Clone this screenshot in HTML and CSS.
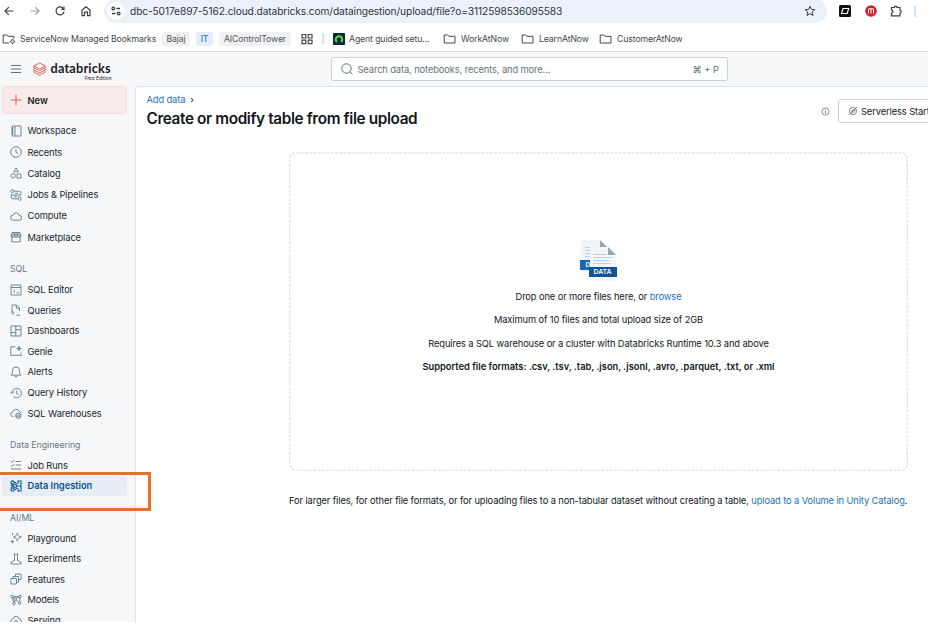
FILE: index.html
```html
<!DOCTYPE html>
<html lang="en">
<head>
<meta charset="utf-8">
<title>Create or modify table from file upload</title>
<link rel="stylesheet" href="styles.css">
</head>
<body>
<div class="window">
  <div class="toolbar">
    <svg class="nav" viewBox="0 0 12 12"><path d="M10.5 6H2M5.8 2.200 2 6l3.800 3.800"/></svg>
    <svg class="nav muted" viewBox="0 0 12 12"><path d="M1.500 6H10M6.200 2.200 10 6 6.200 9.800"/></svg>
    <svg class="nav" viewBox="0 0 12 12"><path d="M9.500 3.800A4 4 0 1 0 10 6.600M10 1.500v2.800H7.200"/></svg>
    <svg class="nav" viewBox="0 0 12 12"><path d="M2 5 6 1.700 10 5v5.700H7.500V7.200h-3v3.500H2z"/></svg>
    <div class="address">
      <span class="site-info"><svg viewBox="0 0 12 12"><circle cx="3.300" cy="3.500" r="1.300"/><path d="M6.500 3.500H10M2 8.500h3.500"/><circle cx="8.700" cy="8.500" r="1.300"/></svg></span>
      <span class="url">dbc-5017e897-5162.cloud.databricks.com/dataingestion/upload/file?o=3112598536095583</span>
      <svg class="star" viewBox="0 0 12 12"><path d="m6 1.200 1.400 3.200 3.500.3-2.700 2.300.8 3.500L6 8.600l-3 1.900.8-3.500L1.100 4.700l3.500-.3z"/></svg>
    </div>
    <svg class="ext" viewBox="0 0 12 12"><rect width="12" height="12" rx="1.500" fill="#111"/><path d="M4 3.500h5.700L8.200 8.500H2.500z" fill="none" stroke="#fff" stroke-width="1.100"/></svg>
    <svg class="ext" viewBox="0 0 12 12"><circle cx="6" cy="6" r="5.800" fill="#d91f2b"/><path d="M3.500 8.500V4M6 8.500V3.500M8.500 8.500V4M3.500 3.800h5" fill="none" stroke="#fff" stroke-width="1"/></svg>
    <svg class="ext line" viewBox="0 0 12 12"><path d="M1.500 2.500h3C4.500.7 7 .7 7 2.500h3v3c1.800 0 1.800 2.300 0 2.300v3H1.500V8.200c2 0 2-3 0-3z"/></svg>
    <i class="divider"></i>
  </div>
  <div class="bookmarks">
    <svg class="folder" viewBox="0 0 14 12"><path d="M7 10H1.200V2h3.500L6 3.300h6V5.500"/><circle cx="10.500" cy="8.500" r="1.700"/><path d="M10.500 5.800v1m0 3.400v1M7.800 8.500h1m3.400 0h1"/></svg>
    <span class="managed">ServiceNow Managed Bookmarks</span>
    <span class="chip">Bajaj</span>
    <span class="chip blue">IT</span>
    <span class="chip">AIControlTower</span>
    <svg class="apps" viewBox="0 0 12 12"><path d="M1 1.500h3.800v3.500H1zM7.200 1.500H11v3.500H7.200zM1 7.200h3.800v3.500H1zM7.200 7.200H11v3.500H7.200z"/></svg>
    <i class="divider"></i>
    <svg class="agent" viewBox="0 0 12 12"><rect width="12" height="12" rx=".8" fill="#052d36"/><path d="M3.900 8.900a3.200 3.200 0 1 1 4.200 0" fill="none" stroke="#61d34c" stroke-width="2"/></svg>
    <span class="guided">Agent guided setu...</span>
    <svg class="folder" viewBox="0 0 14 12"><path d="M1.200 10V2h3.500L6 3.300h6V10z"/></svg>
    <span class="place">WorkAtNow</span>
    <svg class="folder" viewBox="0 0 14 12"><path d="M1.200 10V2h3.500L6 3.300h6V10z"/></svg>
    <span class="place">LearnAtNow</span>
    <svg class="folder" viewBox="0 0 14 12"><path d="M1.200 10V2h3.500L6 3.300h6V10z"/></svg>
    <span class="place">CustomerAtNow</span>
  </div>
  <header class="header">
    <svg class="burger" viewBox="0 0 12 12"><path d="M1 2.500h10M1 6h10M1 9.500h10"/></svg>
    <svg class="brick" viewBox="0 0 12 13"><path d="M.8 3.600 6 .9l5.200 2.700L6 6.500zM.8 3.600v1.700L6 8.200l5.200-2.900V3.600M.8 5.500v2L6 10.200l5.200-2.700v-2M.8 7.700v1.800L6 12.300l5.200-2.800V7.700"/></svg>
    <div class="brand"><b>databricks</b><small>Free Edition</small></div>
    <div class="search">
      <svg viewBox="0 0 12 12"><circle cx="5.500" cy="5.500" r="4.700"/><path d="m9 9 2.300 2.300"/></svg>
      <span class="hint">Search data, notebooks, recents, and more...</span>
      <span class="keys">⌘ + P</span>
    </div>
  </header>
  <div class="body">
    <nav class="sidebar">
      <a class="new"><svg viewBox="0 0 12 12"><path d="M6 .8v10.400M.8 6h10.400"/></svg>New</a>
      <div class="group main">
        <a><svg viewBox="0 0 12 12"><path d="M2.500 1H11v10H2.500zM5 1v10M1 3h2.500M1 5h2.500M1 7h2.500M1 9h2.500"/></svg>Workspace</a>
        <a><svg viewBox="0 0 12 12"><circle cx="6" cy="6" r="5.300"/><path d="M6 3v3.300l2 1.200"/></svg>Recents</a>
        <a><svg viewBox="0 0 12 12"><path d="M6 .8 8.200 4.800H3.800zM7 7h4v4H7z"/><circle cx="3.200" cy="8.800" r="2.200"/></svg>Catalog</a>
        <a><svg viewBox="0 0 12 12"><circle cx="2.300" cy="2.200" r="1.500"/><circle cx="9.700" cy="9.800" r="1.500"/><path d="M3.800 2.200h5.500a1.900 1.900 0 0 1 0 3.800H3a1.900 1.900 0 0 0 0 3.800h5.200M5 4.300h3M4 7.800h3M1 4.800l2 2M11 5.500 8.500 7.800"/></svg>Jobs &amp; Pipelines</a>
        <a><svg viewBox="0 0 12 12"><path d="M3.200 10.200a2.500 2.500 0 0 1-.2-5 3.200 3.200 0 0 1 6.200.2 2.400 2.400 0 0 1 0 4.800z"/></svg>Compute</a>
        <a><svg viewBox="0 0 12 12"><path d="M2 1.500h8L11 5H1zM1.800 5v6h8.400V5M1 5c.4 2 2.800 2 3.300 0 .4 2 3 2 3.400 0 .5 2 3 2 3.300 0M4.500 1.500V5m3-3.500V5M2 3.200h8"/></svg>Marketplace</a>
      </div>
      <h4>SQL</h4>
      <div class="group">
        <a><svg viewBox="0 0 12 12"><path d="M1 1h10v10H1zM1 3.500h10M3.500 6l1.500 1.200-1.500 1.300M6.500 8.800h2.500"/></svg>SQL Editor</a>
        <a><svg viewBox="0 0 12 12"><path d="M2 9.500V1h4.500L9.500 4v3M6.300 1v3.200h3.200M2 7l2 1.800-2 2M6.500 11.200H10"/></svg>Queries</a>
        <a><svg viewBox="0 0 12 12"><path d="M1 1h10v10H1zM5.800 1v10M1 7.500h4.800M5.800 4.700H11"/></svg>Dashboards</a>
        <a><svg viewBox="0 0 12 12"><path d="M5.500 1.800H.8v8.500h10.400V7.500"/><path d="M9 .8c.3 1.800.9 2.400 2.700 2.700C9.900 3.800 9.300 4.400 9 6.200 8.700 4.400 8.100 3.800 6.300 3.500 8.100 3.200 8.700 2.600 9 .8z" fill="currentColor" stroke-width=".5"/></svg>Genie</a>
        <a><svg viewBox="0 0 12 12"><path d="M1 9.200h10L9.500 7V4.500a3.500 3.500 0 0 0-7 0V7zM4.700 9.500a1.300 1.300 0 0 0 2.600 0"/></svg>Alerts</a>
        <a><svg viewBox="0 0 12 12"><path d="M2 6a4.700 4.700 0 1 1 1.400 3.400M.3 4.700 2 6.500l1.700-1.800M6.700 3.500v3l2 1"/></svg>Query History</a>
        <a><svg viewBox="0 0 12 12"><path d="M3.700 9.600H3.200a2.400 2.400 0 0 1-.2-4.800 3.100 3.100 0 0 1 6-.3 2.100 2.100 0 0 1 2 1.500"/><ellipse cx="8.300" cy="7.300" rx="2.400" ry="1"/><path d="M5.900 7.300v3c0 1.200 4.800 1.200 4.800 0v-3M5.900 9c0 1.200 4.800 1.200 4.800 0"/></svg>SQL Warehouses</a>
      </div>
      <h4>Data Engineering</h4>
      <div class="group">
        <a><svg viewBox="0 0 12 12"><path d="M5.500 2.500H11M5.500 6H11M.8 10h10.400M1 2.500l1 1L4 1M1 6.500l1 1L4 5"/></svg>Job Runs</a>
        <a class="active"><svg viewBox="0 0 12 12"><circle cx="2.500" cy="2.500" r="1.600"/><circle cx="5" cy="6" r="1.500"/><circle cx="2.500" cy="9.500" r="1.600"/><path d="M4 2.500h1.500L7 4.500M4 9.500h1.500L7 7.500M.8 4.500 2.700 6 .8 7.500M6.500 6h4.500M8 4V1h3v10H8V8"/></svg>Data Ingestion</a>
      </div>
      <h4>AI/ML</h4>
      <div class="group">
        <a><svg viewBox="0 0 12 12"><path d="M7.300 1c.6 2.600 1.300 3.300 4 4-2.700.7-3.400 1.400-4 4-.7-2.600-1.400-3.300-4-4 2.600-.7 3.300-1.400 4-4zM2.300 7.700v3.600M.5 9.500h3.600M2.500 1v2"/></svg>Playground</a>
        <a><svg viewBox="0 0 12 12"><path d="M3.500 1h5M4.500 1v6.500L1 9.300V11h10V9.300L7.500 7.500V1"/></svg>Experiments</a>
        <a><svg viewBox="0 0 12 12"><path d="M1 5.500h5.500V11H1zM3 5.500v-2h5.500V9h-2M5.500 3.500V1H11v5.500H8.500"/></svg>Features</a>
        <a><svg viewBox="0 0 12 12"><circle cx="2" cy="2.500" r="1.300"/><circle cx="10" cy="2.500" r="1.300"/><circle cx="4" cy="9.700" r="1.300"/><circle cx="9.700" cy="9.200" r="1.300"/><circle cx="5.200" cy="5" r="1.300"/><path d="M3.300 2.500h5.400M3 3.500l1.300.8M2.300 3.800l1.400 4.600M6.200 4.200 9 3.200M4.300 8.400 5 6.300M9.900 3.800v4.100M6 6l2.800 2.300"/></svg>Models</a>
        <a><svg viewBox="0 0 12 12"><path d="M3.200 9.500a2.400 2.400 0 0 1-.2-4.800 3.200 3.200 0 0 1 6.200.2 2.300 2.300 0 0 1 0 4.600"/><circle cx="6" cy="8" r="1.500"/></svg>Serving</a>
      </div>
    </nav>
    <main class="content">
      <div class="crumbs"><a>Add data</a><span>›</span></div>
      <div class="title-row">
        <h1>Create or modify table from file upload</h1>
        <svg class="info" viewBox="0 0 12 12"><circle cx="6" cy="6" r="4.800"/><path d="M6 5.200V9M6 3v1.200"/></svg>
        <div class="compute"><svg viewBox="0 0 12 12"><circle cx="6" cy="6" r="4.300"/><path d="m1 11 10-10M3.500 7.500l4-4M5 9l4-4"/></svg>Serverless Starter</div>
      </div>
      <div class="upload">
        <div class="drop">
          <svg class="outline" viewBox="0 0 619 319"><rect x=".75" y=".75" width="617.500" height="317.500" rx="6.500"/></svg>
          <svg class="files" viewBox="0 0 38 42">
            <path d="M1 3q0-2 2-2h17l7 7v25H3q-2 0-2-2z" fill="#f1f3f6"/><path d="M20 1v7h7z" fill="#98a5b2"/>
            <path d="M5 8.500h7M5 11.500h6M5 14.500h6M5 17.500h6" stroke="#a9d6fa"/>
            <rect y="21" width="27" height="10" fill="#1768ad"/><text x="5.500" y="28.300" font-size="6.400">D</text>
            <path d="M10 8h18l8 8v24q0 2-2 2H12q-2 0-2-2z" fill="#f3f5f7"/><path d="M28 8v8h8z" fill="#98a5b2"/>
            <path d="M13 15.500h13M13 18.500h20M13 21.500h16M13 24.500h18" stroke="#a9d6fa"/>
            <rect x="9" y="28" width="28" height="10" fill="#105697"/><text x="13.500" y="35.400" font-size="6.800">DATA</text>
          </svg>
          <p class="l1">Drop one or more files here, or <a>browse</a></p>
          <p class="l2">Maximum of 10 files and total upload size of 2GB</p>
          <p class="l3">Requires a SQL warehouse or a cluster with Databricks Runtime 10.3 and above</p>
          <p class="l4">Supported file formats: .csv, .tsv, .tab, .json, .jsonl, .avro, .parquet, .txt, or .xml</p>
        </div>
        <p class="larger">For larger files, for other file formats, or for uploading files to a non-tabular dataset without creating a table, <a>upload to a Volume in Unity Catalog</a>.</p>
      </div>
    </main>
  </div>
  <div class="highlight"></div>
</div>
</body>
</html>
```
FILE: styles.css
```css
* { box-sizing: border-box; }
body { margin: 0; background: #fff; overflow: hidden; font-family: Inter, "Liberation Sans", sans-serif; font-size: 9.3px; letter-spacing: -.1px; color: #11171c; white-space: nowrap; }
svg { display: block; flex: none; fill: none; stroke: currentColor; stroke-width: 1; }
p, h1, h4 { margin: 0; }
a { color: #2272b4; }
.window { position: relative; width: 928px; height: 622px; overflow: hidden; display: flex; flex-direction: column; }

.toolbar { height: 22px; flex: none; display: flex; align-items: center; padding-left: 3px; color: #3c4043; }
.nav { width: 12px; height: 12px; margin-right: 13.500px; stroke-width: 1.200; }
.nav.muted { color: #9a9da0; }
.address { width: 723px; height: 24px; margin-left: -1px; background: #ebf1fa; border-radius: 12px; display: flex; align-items: center; padding: 0 11px 0 3px; }
.site-info { width: 18px; height: 18px; border-radius: 50%; background: #fff; display: flex; align-items: center; justify-content: center; }
.site-info svg { width: 12px; height: 12px; stroke-width: 1.300; }
.url { margin-left: 5px; flex: 1; font-size: 10.200px; color: #30343a; letter-spacing: -.11px; }
.star { width: 12px; height: 12px; }
.ext { width: 12px; height: 12px; margin-left: 13.500px; stroke: none; }
.address + .ext { margin-left: 12px; }
.ext.line { stroke: currentColor; stroke-width: 1.200; }
.divider { width: 1.500px; height: 11px; flex: none; background: #d2e2fb; }
.toolbar .divider { margin-left: 12px; }

.bookmarks { height: 30px; flex: none; border-bottom: 1px solid #d9dadd; display: flex; align-items: center; padding: 5px 0 1px 2px; font-size: 8.700px; letter-spacing: -.11px; color: #45484c; }
.bookmarks > span { flex: none; }
.folder { width: 14px; height: 12px; }
.managed { width: 146px; padding-left: 4px; }
.chip { height: 14px; width: 28px; border-radius: 3px; background: #f0f1f3; display: flex; align-items: center; justify-content: center; margin-right: 6px; color: #54575b; }
.chip.blue { width: 17px; background: #e3edfd; color: #1d5fd0; }
.chip.blue + .chip { width: 72px; }
.apps { width: 12px; height: 12px; margin: 0 9px 0 4px; stroke-width: 1.200; }
.agent { width: 12px; height: 12px; margin-left: 9.500px; stroke: none; }
.guided { padding-left: 4px; width: 98px; }
.place { padding-left: 4px; width: 64px; }

.header { height: 34px; flex: none; background: #f6f7f9; display: flex; align-items: center; padding-left: 10px; color: #5f7281; }
.burger { width: 12px; height: 12px; }
.brick { width: 13px; height: 14px; margin-left: 11px; color: #f0523f; stroke-width: .8; }
.brand { width: 61px; margin-left: 4.500px; padding-top: 4px; color: #1b2025; }
.brand b { display: block; font-family: Lato, Inter, sans-serif; font-size: 12.700px; line-height: 13px; letter-spacing: .2px; }
.brand small { display: block; font-size: 4.800px; line-height: 6px; text-align: right; letter-spacing: 0; }
.search { width: 397px; height: 24px; margin-left: 219.500px; border: 1px solid #c8d1da; border-radius: 3px; background: #fff; display: flex; align-items: center; padding: 0 8px 0 9px; }
.search svg { width: 12px; height: 12px; }
.hint { margin-left: 4.500px; flex: 1; }
.keys { letter-spacing: 0; }

.body { flex: 1; min-height: 0; display: flex; background: #f6f7f9; }
.sidebar { width: 135px; flex: none; padding: 0 8px 0 2px; }
.sidebar a { display: flex; align-items: center; height: 20.600px; padding-left: 8px; color: #20262c; border-radius: 3px; }
.sidebar svg { width: 12px; height: 12px; margin-right: 5.500px; color: #6c818f; stroke-width: .95; }
.sidebar a.new { height: 28px; background: #f8e9ea; border: 1px solid #f7dcdd; border-radius: 4px; font-weight: 600; letter-spacing: 0; }
.sidebar .new svg { color: #f34c4c; margin-left: -1px; }
.main { padding-top: 6.200px; }
.sidebar .main a { height: 21.250px; }
h4 { height: 20px; line-height: 20px; padding-left: 8px; font-size: 8.800px; font-weight: 400; letter-spacing: -.05px; color: #66798a; margin-top: 11.600px; }
.sidebar a.active { background: #e6edf6; color: #0e538b; font-weight: 600; letter-spacing: 0; }
.sidebar .active svg { color: #0e538b; stroke-width: 1.100; }

.content { width: 793px; flex: none; background: #fff; border: solid #dbe4ed; border-width: 1px 0 0 1px; border-radius: 4px 0 0 0; padding: 6px 0 0 10.500px; }
.crumbs { height: 14px; line-height: 14px; display: flex; gap: 5px; }
.title-row { display: flex; height: 24px; align-items: center; }
h1 { width: 674.500px; flex: none; font-size: 15.300px; font-weight: 600; line-height: 20px; letter-spacing: -.36px; }
.info { width: 9px; height: 9px; margin-top: -16px; color: #5f7281; }
.compute { margin: -16px 0 0 8px; width: 120px; height: 24px; flex: none; border: 1px solid #c8d1da; border-radius: 3px; display: flex; align-items: center; padding-left: 9px; }
.compute svg { width: 10px; height: 10px; margin-right: 3px; color: #5f7281; }
.upload { width: 619px; margin: 21px 0 0 142.500px; }
.drop { position: relative; height: 319px; display: flex; flex-direction: column; align-items: center; padding-top: 87px; }
.outline { position: absolute; inset: 0; width: 619px; height: 319px; stroke: #e1e6ed; stroke-width: 1.500; stroke-dasharray: 3 1.300; }
.files { width: 38px; height: 42px; margin-bottom: 4px; stroke: none; }
.files text { fill: #fff; font-weight: 600; letter-spacing: 0; }
.drop p { height: 23.400px; line-height: 23.400px; }
.drop .l4 { font-weight: 600; letter-spacing: 0; }
.larger { margin-top: 23px; line-height: 14px; }
.highlight { position: absolute; left: -4px; top: 472px; width: 155px; height: 39px; border: 3px solid #e96f2d; }
```
